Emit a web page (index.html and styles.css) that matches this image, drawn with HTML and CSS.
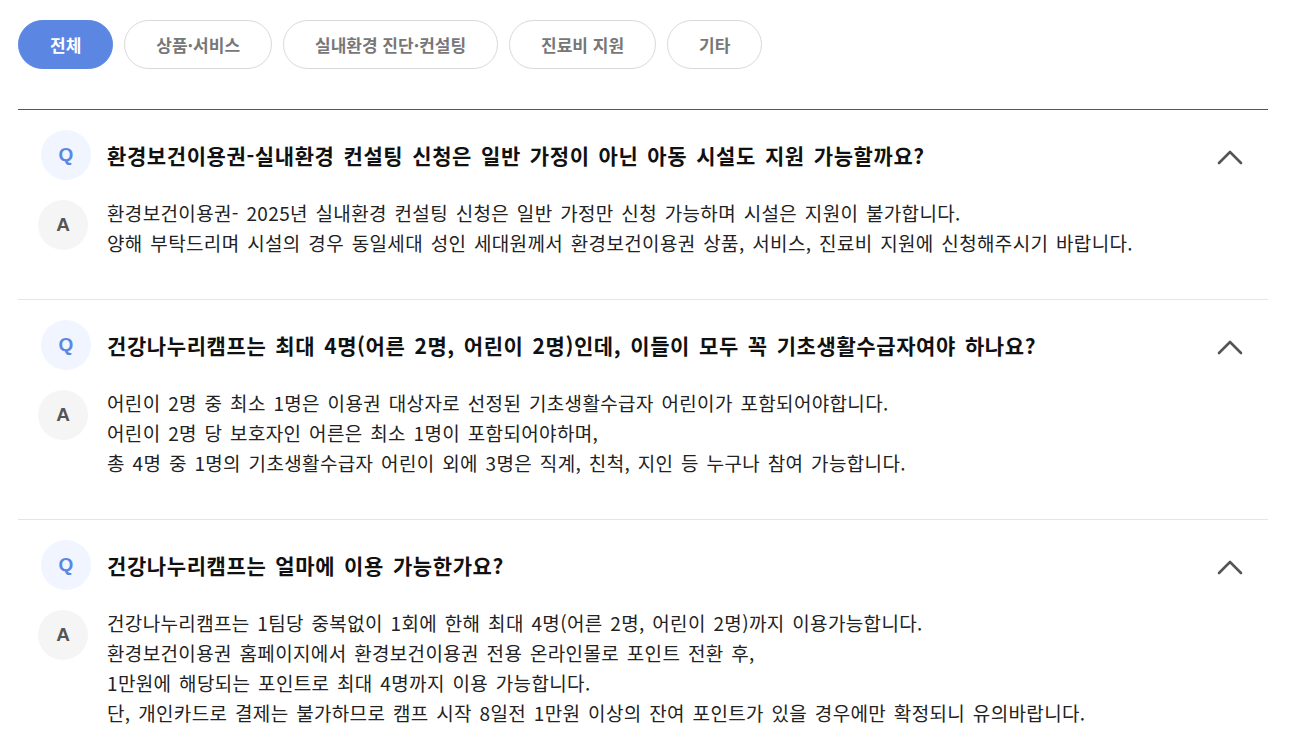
FILE: index.html
```html
<!DOCTYPE html>
<html lang="ko">
<head>
<meta charset="utf-8">
<link rel="stylesheet" href="styles.css">
</head>
<body>
<div class="page">
  <div class="tabs">
    <button class="tab active">전체</button>
    <button class="tab">상품·서비스</button>
    <button class="tab">실내환경 진단·컨설팅</button>
    <button class="tab">진료비 지원</button>
    <button class="tab">기타</button>
  </div>
  <div class="list">
    <div class="item">
      <div class="q-row">
        <span class="badge q">Q</span>
        <p class="q-text">환경보건이용권-실내환경 컨설팅 신청은 일반 가정이 아닌 아동 시설도 지원 가능할까요?</p>
        <svg class="chev" width="26" height="16" viewBox="0 0 26 16"><path d="M2 14 L13 3 L24 14" fill="none" stroke="#555" stroke-width="2.6" stroke-linecap="round" stroke-linejoin="round"/></svg>
      </div>
      <div class="a-row">
        <span class="badge a">A</span>
        <p class="a-text">환경보건이용권- 2025년 실내환경 컨설팅 신청은 일반 가정만 신청 가능하며 시설은 지원이 불가합니다.<br>양해 부탁드리며 시설의 경우 동일세대 성인 세대원께서 환경보건이용권 상품, 서비스, 진료비 지원에 신청해주시기 바랍니다.</p>
      </div>
    </div>
    <div class="item">
      <div class="q-row">
        <span class="badge q">Q</span>
        <p class="q-text">건강나누리캠프는 최대 4명(어른 2명, 어린이 2명)인데, 이들이 모두 꼭 기초생활수급자여야 하나요?</p>
        <svg class="chev" width="26" height="16" viewBox="0 0 26 16"><path d="M2 14 L13 3 L24 14" fill="none" stroke="#555" stroke-width="2.6" stroke-linecap="round" stroke-linejoin="round"/></svg>
      </div>
      <div class="a-row">
        <span class="badge a">A</span>
        <p class="a-text">어린이 2명 중 최소 1명은 이용권 대상자로 선정된 기초생활수급자 어린이가 포함되어야합니다.<br>어린이 2명 당 보호자인 어른은 최소 1명이 포함되어야하며,<br>총 4명 중 1명의 기초생활수급자 어린이 외에 3명은 직계, 친척, 지인 등 누구나 참여 가능합니다.</p>
      </div>
    </div>
    <div class="item">
      <div class="q-row">
        <span class="badge q">Q</span>
        <p class="q-text">건강나누리캠프는 얼마에 이용 가능한가요?</p>
        <svg class="chev" width="26" height="16" viewBox="0 0 26 16"><path d="M2 14 L13 3 L24 14" fill="none" stroke="#555" stroke-width="2.6" stroke-linecap="round" stroke-linejoin="round"/></svg>
      </div>
      <div class="a-row">
        <span class="badge a">A</span>
        <p class="a-text">건강나누리캠프는 1팀당 중복없이 1회에 한해 최대 4명(어른 2명, 어린이 2명)까지 이용가능합니다.<br>환경보건이용권 홈페이지에서 환경보건이용권 전용 온라인몰로 포인트 전환 후,<br>1만원에 해당되는 포인트로 최대 4명까지 이용 가능합니다.<br>단, 개인카드로 결제는 불가하므로 캠프 시작 8일전 1만원 이상의 잔여 포인트가 있을 경우에만 확정되니 유의바랍니다.</p>
      </div>
    </div>
  </div>
</div>
</body>
</html>
```
FILE: styles.css
```css
* { box-sizing: border-box; }
html, body { margin: 0; padding: 0; background: #fff; }
body {
  font-family: "Noto Sans CJK KR", "Noto Sans", sans-serif;
  color: #111;
}
.page {
  padding: 20px 37px 0 18px;
}
.tabs {
  display: flex;
  gap: 11px;
}
.tab {
  height: 49px;
  padding: 0 31px;
  border: 1px solid #d9d9d9;
  border-radius: 25px;
  background: #fff;
  color: #777;
  font-family: inherit;
  font-size: 17px;
  font-weight: 700;
}
.tab.active {
  background: #5b87e3;
  border-color: #5b87e3;
  color: #fff;
}
.list {
  margin-top: 40px;
  border-top: 1px solid #555;
}
.item {
  padding: 20px 0 41px;
  border-bottom: 1px solid #e5e5e5;
}
.q-row {
  display: flex;
  align-items: center;
  padding-left: 23px;
}
.badge {
  flex: none;
  width: 50px;
  height: 50px;
  border-radius: 50%;
  display: flex;
  align-items: center;
  justify-content: center;
  font-family: "Liberation Sans", Arial, sans-serif;
  font-weight: 700;
  font-size: 19px;
}
.badge.q { background: #f0f5ff; color: #5b87e3; }
.badge.a { background: #f5f5f5; color: #555; }
.q-text {
  flex: 1;
  margin: 0 0 0 16px;
  font-size: 21px;
  font-weight: 600;
  color: #111;
  letter-spacing: 0.6px;
  word-spacing: 2.5px;
}
.chev { flex: none; margin-right: 25px; margin-top: 4px; }
.a-row {
  display: flex;
  align-items: flex-start;
  margin-top: 20px;
  padding-left: 20px;
}
.a-text {
  margin: -2px 0 0 19px;
  font-size: 19px;
  line-height: 30px;
  color: #222;
  letter-spacing: 0.35px;
  word-spacing: 2px;
}
```
